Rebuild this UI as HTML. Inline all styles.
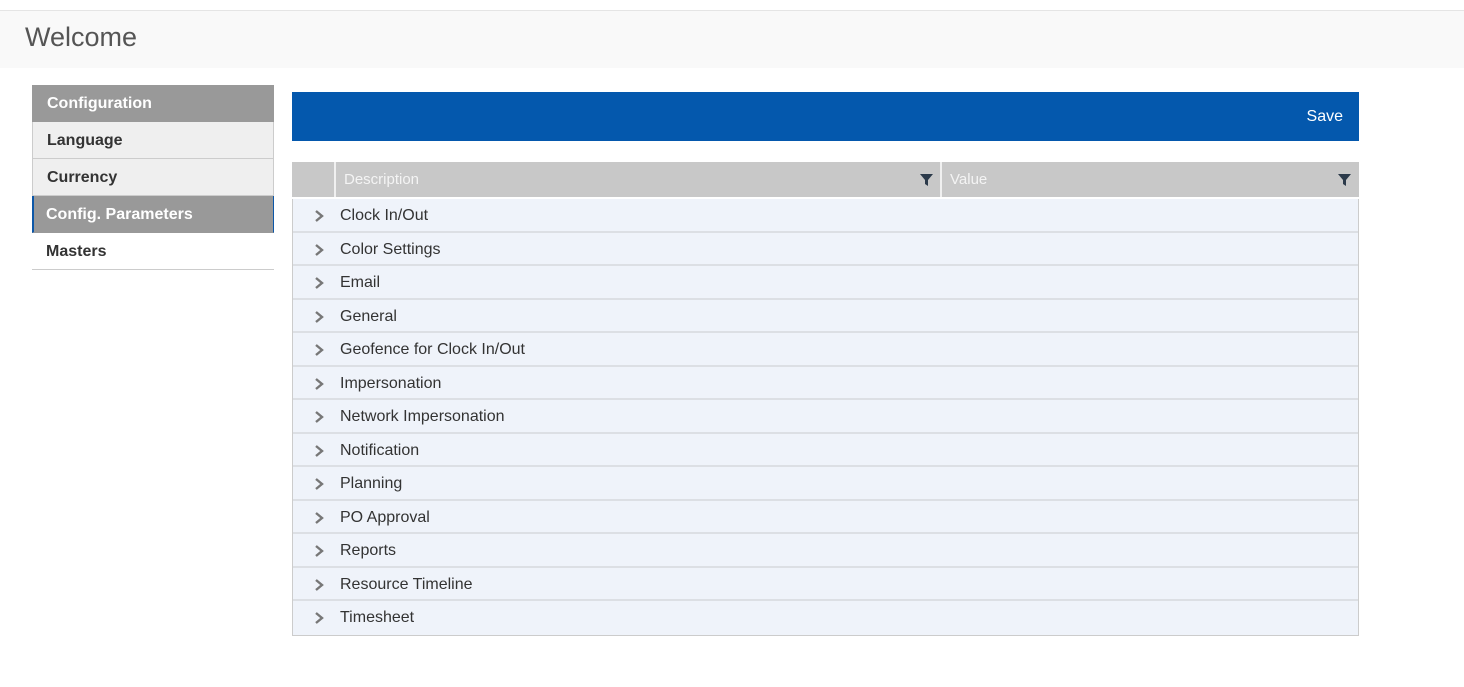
<!DOCTYPE html>
<html><head><style>
*{margin:0;padding:0;box-sizing:border-box}
body{width:1464px;height:687px;background:#fff;font-family:"Liberation Sans",Arial,sans-serif;position:relative;overflow:hidden}
.hdr{position:absolute;top:10px;left:0;width:1464px;height:58px;background:#f9f9f9;border-top:1px solid #e5e5e5}
.hdr h1{position:absolute;left:25px;top:11px;font-size:27px;font-weight:normal;color:#555}
.side{position:absolute;left:32px;top:85px;width:242px}
.side div{height:37px;line-height:38px;padding-left:14px;font-size:16px;font-weight:bold;color:#333;background:#efefef;border:1px solid #ccc;border-top:none}
.side .a{background:#999;color:#fff;border-color:#999}
.side .cp{border-left:2px solid #0c57a8;border-right:1px solid #0c57a8;padding-left:12px}
.side .m{background:#fff;border-left:none;border-right:none;border-bottom:1px solid #ccc}
.bar{position:absolute;left:292px;top:92px;width:1067px;height:49px;background:#0458ad}
.bar span{position:absolute;right:16px;top:16px;color:#fff;font-size:16px}
.th{position:absolute;left:292px;top:162px;width:1067px;height:35px;background:#c8c8c8;color:#f4f4f4;font-size:15px}
.th div{position:absolute;top:0;height:35px;line-height:36px;padding-left:8px}
.fl{position:absolute;top:12px;width:13px;height:12px}
.rows{position:absolute;left:292px;top:199px;width:1067px;border:1px solid #ccc;border-top:none}
.r{height:33.5px;line-height:33px;background:#eff3fa;border-bottom:2px solid #dcdfe4;font-size:16px;color:#333;position:relative;padding-left:47px}
.r:last-child{border-bottom:none}
.r svg{position:absolute;left:21px;top:11px}
</style></head><body>
<div class="hdr"><h1>Welcome</h1></div>
<div class="side">
<div class="a">Configuration</div>
<div>Language</div>
<div>Currency</div>
<div class="a cp">Config. Parameters</div>
<div class="m">Masters</div>
</div>
<div class="bar"><span>Save</span></div>
<div class="th">
<div style="left:42px;width:606px;border-left:2px solid #f0f0f0">Description</div>
<div style="left:648px;width:419px;border-left:2px solid #f0f0f0">Value</div>
<svg class="fl" style="left:628px" viewBox="0 0 13 12"><path d="M0 0H13L8 6V12L5 10V6Z" fill="#2b3a4a"/></svg>
<svg class="fl" style="left:1046px" viewBox="0 0 13 12"><path d="M0 0H13L8 6V12L5 10V6Z" fill="#2b3a4a"/></svg>
</div>
<div class="rows">
<div class="r"><svg width="10" height="12"><path d="M2 1L8 6L2 11" stroke="#777" stroke-width="2.4" fill="none"/></svg>Clock In/Out</div>
<div class="r"><svg width="10" height="12"><path d="M2 1L8 6L2 11" stroke="#777" stroke-width="2.4" fill="none"/></svg>Color Settings</div>
<div class="r"><svg width="10" height="12"><path d="M2 1L8 6L2 11" stroke="#777" stroke-width="2.4" fill="none"/></svg>Email</div>
<div class="r"><svg width="10" height="12"><path d="M2 1L8 6L2 11" stroke="#777" stroke-width="2.4" fill="none"/></svg>General</div>
<div class="r"><svg width="10" height="12"><path d="M2 1L8 6L2 11" stroke="#777" stroke-width="2.4" fill="none"/></svg>Geofence for Clock In/Out</div>
<div class="r"><svg width="10" height="12"><path d="M2 1L8 6L2 11" stroke="#777" stroke-width="2.4" fill="none"/></svg>Impersonation</div>
<div class="r"><svg width="10" height="12"><path d="M2 1L8 6L2 11" stroke="#777" stroke-width="2.4" fill="none"/></svg>Network Impersonation</div>
<div class="r"><svg width="10" height="12"><path d="M2 1L8 6L2 11" stroke="#777" stroke-width="2.4" fill="none"/></svg>Notification</div>
<div class="r"><svg width="10" height="12"><path d="M2 1L8 6L2 11" stroke="#777" stroke-width="2.4" fill="none"/></svg>Planning</div>
<div class="r"><svg width="10" height="12"><path d="M2 1L8 6L2 11" stroke="#777" stroke-width="2.4" fill="none"/></svg>PO Approval</div>
<div class="r"><svg width="10" height="12"><path d="M2 1L8 6L2 11" stroke="#777" stroke-width="2.4" fill="none"/></svg>Reports</div>
<div class="r"><svg width="10" height="12"><path d="M2 1L8 6L2 11" stroke="#777" stroke-width="2.4" fill="none"/></svg>Resource Timeline</div>
<div class="r"><svg width="10" height="12"><path d="M2 1L8 6L2 11" stroke="#777" stroke-width="2.4" fill="none"/></svg>Timesheet</div>
</div>
</body></html>
